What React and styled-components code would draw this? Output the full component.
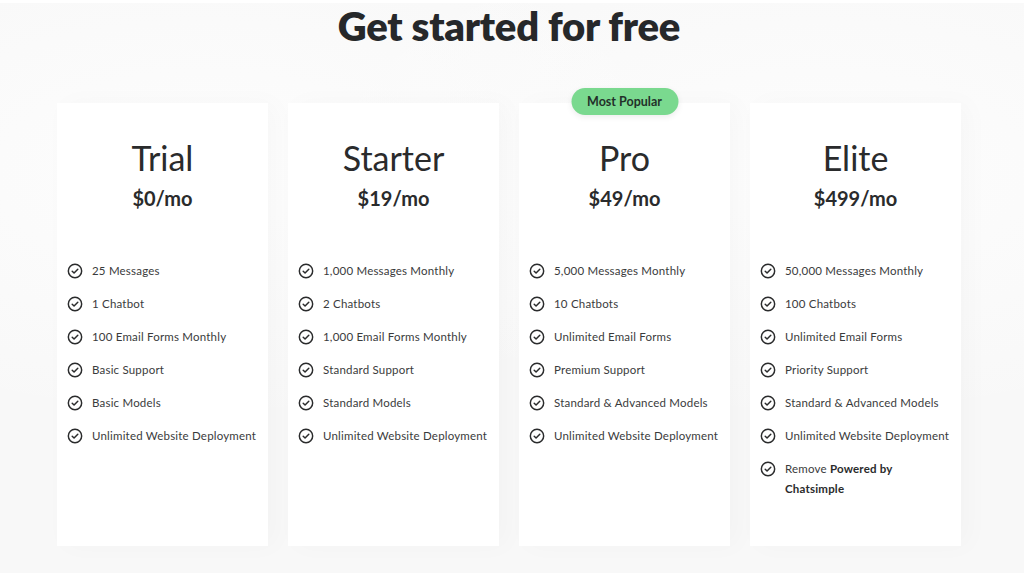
import React from "react";
import styled, { createGlobalStyle } from "styled-components";

const GlobalStyle = createGlobalStyle`
  * { box-sizing: border-box; }
  html, body { margin: 0; padding: 0; }
  body {
    font-family: "Lato", "Noto Sans", sans-serif;
    color: #2a2b2c;
    background: #f9f9f9;
  }
`;

const Page = styled.div`
  min-height: 573px;
  padding: 0 6px 0 0;
  background:
    radial-gradient(ellipse at 20% 30%, #fdfdfd 0%, rgba(253,253,253,0) 45%),
    radial-gradient(ellipse at 80% 30%, #fdfdfd 0%, rgba(253,253,253,0) 45%),
    #f8f8f8;
  border-top: 3px solid #ffffff;
`;

const Heading = styled.h1`
  margin: 0;
  padding-top: 1px;
  text-align: center;
  font-size: 40px;
  font-weight: 800;
  letter-spacing: -0.2px;
  line-height: 44px;
  color: #26282a;
`;

const Grid = styled.div`
  display: grid;
  grid-template-columns: repeat(4, 211px);
  gap: 20px;
  justify-content: center;
  margin-top: 55px;
`;

const Card = styled.div`
  position: relative;
  height: 443px;
  background: #ffffff;
  padding: 35px 10px 0 10px;
  box-shadow: 8px 0 24px rgba(0, 0, 0, 0.025);
`;

const Badge = styled.div`
  position: absolute;
  top: -15px;
  left: 50%;
  transform: translateX(-50%);
  width: 107px;
  height: 27px;
  border-radius: 14px;
  background: #7ad98f;
  display: flex;
  align-items: center;
  justify-content: center;
  font-size: 12.5px;
  font-weight: 700;
  color: #23302a;
  box-shadow: 0 2px 6px rgba(0, 0, 0, 0.08);
`;

const PlanName = styled.h2`
  margin: 0;
  text-align: center;
  font-size: 34px;
  font-weight: 400;
  line-height: 40px;
  color: #2a2b2c;
`;

const Price = styled.div`
  margin-top: 8px;
  text-align: center;
  font-size: 20px;
  font-weight: 700;
  line-height: 24px;
  color: #2a2b2c;
`;

const FeatureList = styled.ul`
  list-style: none;
  margin: 51px 0 0 0;
  padding: 0;
  display: flex;
  flex-direction: column;
  gap: 13px;
`;

const Feature = styled.li`
  display: flex;
  align-items: flex-start;
  gap: 9px;
  font-size: 11.5px;
  line-height: 20px;
  letter-spacing: 0.2px;
  color: #3a3b3c;

  b {
    font-weight: 700;
    color: #2a2b2c;
  }
`;

const IconBox = styled.span`
  flex: none;
  width: 16px;
  height: 20px;
  display: flex;
  align-items: center;
`;

const Check = () => (
  <IconBox>
    <svg width="16" height="16" viewBox="0 0 24 24" fill="none" stroke="#2a2b2c" strokeWidth="2.2" strokeLinecap="round" strokeLinejoin="round">
      <circle cx="12" cy="12" r="10" />
      <path d="M7.8 12.3l2.8 2.8 5.6-5.8" />
    </svg>
  </IconBox>
);

const plans = [
  {
    name: "Trial",
    price: "$0/mo",
    features: ["25 Messages", "1 Chatbot", "100 Email Forms Monthly", "Basic Support", "Basic Models", "Unlimited Website Deployment"],
  },
  {
    name: "Starter",
    price: "$19/mo",
    features: ["1,000 Messages Monthly", "2 Chatbots", "1,000 Email Forms Monthly", "Standard Support", "Standard Models", "Unlimited Website Deployment"],
  },
  {
    name: "Pro",
    price: "$49/mo",
    popular: true,
    features: ["5,000 Messages Monthly", "10 Chatbots", "Unlimited Email Forms", "Premium Support", "Standard & Advanced Models", "Unlimited Website Deployment"],
  },
  {
    name: "Elite",
    price: "$499/mo",
    features: [
      "50,000 Messages Monthly",
      "100 Chatbots",
      "Unlimited Email Forms",
      "Priority Support",
      "Standard & Advanced Models",
      "Unlimited Website Deployment",
      <>Remove <b>Powered by</b><br /><b>Chatsimple</b></>,
    ],
  },
];

export default function App() {
  return (
    <>
      <GlobalStyle />
      <Page>
        <Heading>Get started for free</Heading>
        <Grid>
          {plans.map((plan) => (
            <Card key={plan.name}>
              {plan.popular && <Badge>Most Popular</Badge>}
              <PlanName>{plan.name}</PlanName>
              <Price>{plan.price}</Price>
              <FeatureList>
                {plan.features.map((f, i) => (
                  <Feature key={i}>
                    <Check />
                    <span>{f}</span>
                  </Feature>
                ))}
              </FeatureList>
            </Card>
          ))}
        </Grid>
      </Page>
    </>
  );
}
